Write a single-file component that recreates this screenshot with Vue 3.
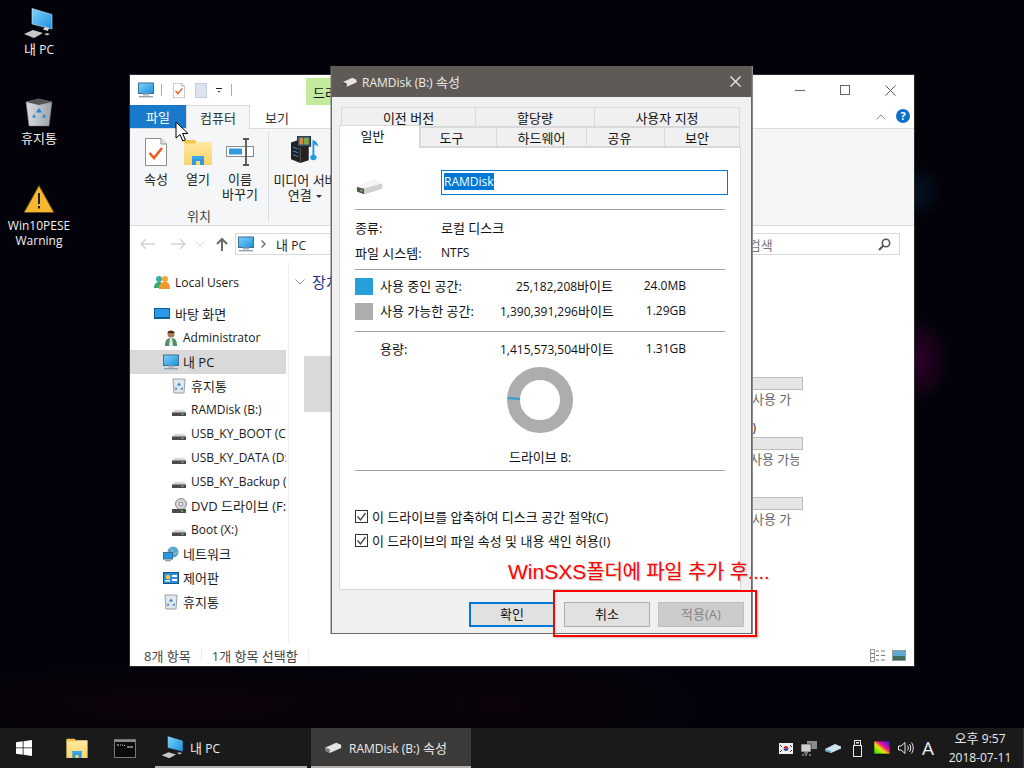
<template>
  <div class="desktop">
    <svg class="defs" width="0" height="0" aria-hidden="true">
      <defs>
        <linearGradient id="scr" x1="0" y1="0" x2="1" y2="1">
          <stop offset="0" stop-color="#7fd4f7" />
          <stop offset="1" stop-color="#1c8fe0" />
        </linearGradient>
        <linearGradient id="fold" x1="0" y1="0" x2="0" y2="1">
          <stop offset="0" stop-color="#ffe9a0" />
          <stop offset="1" stop-color="#fbd36b" />
        </linearGradient>
        <linearGradient id="binG" x1="0" y1="0" x2="1" y2="0">
          <stop offset="0" stop-color="#d8dde2" />
          <stop offset="1" stop-color="#9aa2a8" />
        </linearGradient>
        <symbol id="i-hdd" viewBox="0 0 16 16">
          <path d="M3.5 8h9.5l2 2.5v3.5H1v-3.5z" fill="#d6d6d6" />
          <rect x="1" y="10.5" width="14" height="3.5" fill="#4b4b4b" />
          <rect x="10.5" y="11.5" width="2" height="1.3" fill="#5fe04a" />
        </symbol>
        <symbol id="i-hdd-big" viewBox="0 0 30 18">
          <path d="M1 9 20 1l9 4v6L9 17l-8-3z" fill="#e2e2e2" />
          <path d="M20 1l9 4-20 6-8-2z" fill="#f5f5f5" />
          <path d="M1 9l8 2v6l-8-3z" fill="#555" />
          <path d="M9 11l20-6v6L9 17z" fill="#cfcfcf" />
          <rect x="5" y="12" width="2" height="2" fill="#6fdc55" />
        </symbol>
        <symbol id="i-mon" viewBox="0 0 16 16">
          <rect x="0.5" y="1" width="15" height="10.5" fill="url(#scr)" stroke="#3d6f8f" stroke-width="1" />
          <rect x="5" y="11.5" width="6" height="2" fill="#9fb3c0" />
          <rect x="1" y="14" width="14" height="1.4" fill="#8fa2ae" />
        </symbol>
        <symbol id="i-bin" viewBox="0 0 16 16">
          <path d="M2 1h12l-1 14H3z" fill="#e3e6ea" stroke="#9aa0a6" />
          <path d="M8 4.5l2 3H6zM5 9l1.4 2.6H3.8zM11 9l1.2 2.6H9.6z" fill="#1f7fd0" />
        </symbol>
        <symbol id="i-chk-doc" viewBox="0 0 22 28">
          <path d="M0.5 0.5H16l5.5 5.5v21.500H0.5z" fill="#fff" stroke="#8e8e8e" />
          <path d="M16 0.5V6h5.500" fill="#e6e6e6" stroke="#8e8e8e" />
          <path d="M4.500 15l4.500 5L17 10" fill="none" stroke="#ee5b22" stroke-width="2.600" />
        </symbol>
        <symbol id="i-folder" viewBox="0 0 28 26">
          <path d="M0 3h28v23H0z" fill="url(#fold)" />
          <rect x="0" y="1" width="12" height="3.500" rx="1.500" fill="#f3c64f" />
          <path d="M8 26v-9h12v9h-4v-4h-4v4z" fill="#2e9be0" />
          <path d="M8 17h12v3H8z" fill="#39a7ee" />
        </symbol>
      </defs>
    </svg>

    <main class="stage">
      <div class="desk-icons">
        <div class="desk-icon pc-spot">
          <svg width="32" height="32" viewBox="0 0 32 32">
            <path d="M9 1.500l20 6v14.500L9 17z" fill="url(#scr)" stroke="#cfe6f3" stroke-width=".6" />
            <path d="M22 20l4 1-1 3-5-1.500z" fill="#d6d6d6" />
            <path d="M1 27l9-4 10 3-9 5z" fill="#c8c8c8" />
            <path d="M21 27l3-1 3 1-3 1.500z" fill="#bbb" />
          </svg>
          <span>내 <b class="lat">PC</b></span>
        </div>
        <div class="desk-icon bin-spot">
          <svg width="28" height="29" viewBox="0 0 28 29">
            <path d="M1 4 14 1l13 3-3 24H4z" fill="url(#binG)" stroke="#777" stroke-width=".5" />
            <path d="M1 4l13-3 13 3-13 3z" fill="#555" />
            <path d="M14 10l3 4.500h-6zM9 16l2 3.500H7zM19 16l2 3.500h-4z" fill="#2484cf" />
          </svg>
          <span>휴지통</span>
        </div>
        <div class="desk-icon warn-spot">
          <svg width="32" height="30" viewBox="0 0 32 30">
            <path d="M16 1.500 31 28.500H1z" fill="#f7b731" stroke="#5f4a16" stroke-width="1" />
            <rect x="15" y="9" width="2" height="11" fill="#222" />
            <rect x="15" y="22" width="2" height="2.500" fill="#222" />
          </svg>
          <span class="lat two">Win10PESE<br />Warning</span>
        </div>
      </div>

      <section class="explorer">
        <header class="ex-title">
          <svg class="qat-pc" width="16" height="16"><use href="#i-mon" /></svg>
          <i class="qat-sep"></i>
          <svg class="qat-doc" width="12" height="15"><use href="#i-chk-doc" /></svg>
          <i class="qat-page"></i>
          <i class="qat-drop"></i>
          <i class="qat-sep last"></i>
          <span class="tool-tab">드라이브 도구</span>
          <div class="win-btns">
            <i class="w-min"></i>
            <i class="w-max"></i>
            <svg width="11" height="11" viewBox="0 0 11 11"><path d="M.5.5l10 10M10.500.5l-10 10" stroke="#555" fill="none" /></svg>
          </div>
        </header>

        <nav class="ex-tabs">
          <span class="etab file">파일</span>
          <span class="etab on">컴퓨터</span>
          <span class="etab">보기</span>
          <svg class="collapse" width="10" height="6" viewBox="0 0 10 6"><path d="M.5 5.500 5 1l4.500 4.500" fill="none" stroke="#888" /></svg>
          <span class="help">?</span>
        </nav>

        <div class="ribbon">
          <div class="r-group">
            <div class="r-btns">
              <div class="r-btn">
                <svg width="22" height="28"><use href="#i-chk-doc" /></svg>
                <span>속성</span>
              </div>
              <div class="r-btn">
                <svg width="28" height="26"><use href="#i-folder" /></svg>
                <span>열기</span>
              </div>
              <div class="r-btn">
                <svg width="28" height="28" viewBox="0 0 28 28">
                  <rect x="0.500" y="8.500" width="27" height="10" fill="#fff" stroke="#8a8a8a" />
                  <rect x="3" y="10.500" width="13" height="6" fill="#2e9be0" />
                  <path d="M17 1h6M17 27h6M20 1v26" stroke="#555" stroke-width="1.800" fill="none" />
                </svg>
                <span>이름<br />바꾸기</span>
              </div>
            </div>
            <div class="r-name">위치</div>
          </div>
          <div class="r-btn media">
            <svg width="32" height="30" viewBox="0 0 32 30">
              <path d="M1 7l12-4 7 3v20l-9 3-10-4z" fill="#222" />
              <path d="M11 10v19" stroke="#5b5b5b" />
              <path d="M3 12l6 2M3 16l6 2M3 20l6 2" stroke="#2f8fe0" />
              <rect x="8" y="0" width="14" height="11" fill="#3d5e7e" stroke="#222" />
              <rect x="10" y="2" width="4" height="7" fill="#d98a3a" />
              <rect x="15" y="2" width="5" height="7" fill="#7fa84a" />
              <path d="M24 20V4c3 1 6 3 6 8-1-2-3-3-4-3v11a3.500 3 0 1 1-2 0z" fill="#1e9be8" />
            </svg>
            <span>미디어 서버<br />연결 <i class="caret"></i></span>
          </div>
        </div>

        <div class="addr">
          <svg class="a-arrow" width="16" height="12" viewBox="0 0 16 12"><path d="M1 6h14M6 1 1 6l5 5" fill="none" stroke="#d4d4d4" stroke-width="1.500" /></svg>
          <svg class="a-arrow fwd" width="16" height="12" viewBox="0 0 16 12"><path d="M1 6h14M10 1l5 5-5 5" fill="none" stroke="#d4d4d4" stroke-width="1.500" /></svg>
          <svg class="a-drop" width="8" height="5" viewBox="0 0 8 5"><path d="M.5.500 4 4 7.500.500" fill="none" stroke="#d4d4d4" /></svg>
          <svg class="a-up" width="12" height="14" viewBox="0 0 12 14"><path d="M6 14V2M1 7l5-5 5 5" fill="none" stroke="#6b6b6b" stroke-width="2" /></svg>
          <div class="a-box">
            <svg width="16" height="16"><use href="#i-mon" /></svg>
            <svg class="a-sep" width="5" height="8" viewBox="0 0 5 8"><path d="M.5.500 4 4 .5 7.500" fill="none" stroke="#666" stroke-width="1.300" /></svg>
            <span>내 <b class="lat">PC</b></span>
          </div>
          <div class="a-search">
            <span>내 PC 검색</span>
            <svg width="13" height="13" viewBox="0 0 13 13"><circle cx="8" cy="5" r="3.700" fill="none" stroke="#555" stroke-width="1.600" /><path d="M5.500 7.500 1 12" stroke="#555" stroke-width="2.200" /></svg>
          </div>
        </div>

        <div class="ex-body">
          <aside class="nav">
            <div
              v-for="row in navRows"
              :key="row.id"
              class="nav-row"
              :class="[row.cls, 'lv' + row.lv]"
            >
              <svg v-if="row.icon === 'users'" width="16" height="16" viewBox="0 0 16 16">
                <circle cx="5" cy="5" r="3" fill="#38b0a0" /><path d="M0 14c0-5 3-6 5-6s5 1 5 6z" fill="#3aa86a" />
                <circle cx="11" cy="5" r="3" fill="#f2a738" /><path d="M5 15c0-6 3-7 6-7s5 1 5 7z" fill="#ee9a2d" />
              </svg>
              <svg v-else-if="row.icon === 'desk'" width="16" height="16" viewBox="0 0 16 16">
                <rect x="0.500" y="2.500" width="15" height="10" fill="#2a9ae8" stroke="#0f5f98" />
                <rect x="1" y="11" width="14" height="1.500" fill="#0f5f98" />
              </svg>
              <svg v-else-if="row.icon === 'admin'" width="16" height="18" viewBox="0 0 16 18">
                <circle cx="8" cy="5" r="3.500" fill="#a9764e" /><path d="M4.500 4c0-3 7-3 7 0z" fill="#3b2a20" />
                <path d="M2 17c0-6 2-8 6-8s6 2 6 8z" fill="#4f8f6a" /><path d="M7 9h2l1 8H6z" fill="#e8e8e8" />
              </svg>
              <svg v-else-if="row.icon === 'dvd'" width="16" height="16" viewBox="0 0 16 16">
                <circle cx="10" cy="6" r="5.500" fill="#d5d5d5" stroke="#888" /><circle cx="10" cy="6" r="1.800" fill="#fff" stroke="#888" />
                <path d="M1 11h14v4H1z" fill="#4b4b4b" /><rect x="10" y="12.500" width="2" height="1.200" fill="#5fe04a" />
              </svg>
              <svg v-else-if="row.icon === 'net'" width="16" height="16" viewBox="0 0 16 16">
                <circle cx="10" cy="6" r="5.500" fill="#5aa5d8" /><path d="M7 2c2 1 3 3 2 5s3 1 5-1" fill="none" stroke="#9fd08a" />
                <rect x="0.500" y="6.500" width="9" height="6.500" fill="#2a9ae8" stroke="#3d6f8f" /><rect x="2" y="14" width="6" height="1.300" fill="#8fa2ae" />
              </svg>
              <svg v-else-if="row.icon === 'ctrl'" width="16" height="16" viewBox="0 0 16 16">
                <rect x="0.500" y="2.500" width="15" height="11" fill="#2a8fd8" stroke="#14558a" />
                <circle cx="5" cy="7" r="2.300" fill="#f4c94a" /><rect x="9" y="5" width="5" height="2" fill="#fff" /><rect x="9" y="9" width="5" height="2" fill="#fff" /><rect x="2" y="10" width="5" height="1.500" fill="#fff" />
              </svg>
              <svg v-else width="16" height="16"><use :href="'#i-' + row.icon" /></svg>
              <span>{{ row.label }}</span>
            </div>
          </aside>
          <div class="nav-line"></div>
          <div class="pane">
            <div class="group-head">
              <svg width="10" height="6" viewBox="0 0 10 6"><path d="M.5.500 5 5 9.500.500" fill="none" stroke="#888" /></svg>
              <span>장치 및 드라이브</span>
            </div>
            <div class="tiles">
              <div v-for="t in driveTiles" :key="t.id" class="tile" :class="{ sel: t.sel }">
                <div class="tile-thumb"></div>
                <div class="tile-info">
                  <div class="tile-name lat">{{ t.name }}</div>
                  <div class="tile-bar"></div>
                  <div class="tile-free" :style="{ paddingLeft: t.pad + 'px' }">{{ t.free }}</div>
                </div>
              </div>
            </div>
          </div>
        </div>

        <footer class="status">
          <span>8개 항목</span>
          <i></i>
          <span>1개 항목 선택함</span>
          <i></i>
          <div class="view-btns">
            <svg width="16" height="13" viewBox="0 0 16 13">
              <rect x="0.500" y="0.500" width="4" height="12" fill="#fff" stroke="#999" />
              <path d="M6 2h3M11 2h4M6 6.500h3M11 6.500h4M6 11h3M11 11h4M1 4.500h3M1 8.500h3" stroke="#777" fill="none" />
            </svg>
            <svg width="14" height="11" viewBox="0 0 14 11">
              <rect x="0.500" y="0.500" width="13" height="10" fill="#5fa8d8" stroke="#999" />
              <rect x="1" y="6" width="12" height="4" fill="#3f6f58" />
            </svg>
          </div>
        </footer>
      </section>

      <section class="dialog">
        <header class="dlg-title">
          <svg width="15" height="12" viewBox="0 0 16 12"><path d="M1 6 11 1.500l4.500 2v3L5 11l-4-2z" fill="#e4e4e4" /><path d="M1 6l4 1.500V11l-4-2z" fill="#444" /></svg>
          <span class="dlg-cap"><b class="lat">RAMDisk (B:)</b> 속성</span>
          <svg width="11" height="11" viewBox="0 0 11 11"><path d="M.5.500l10 10M10.500.500l-10 10" stroke="#f0f0f0" stroke-width="1.200" fill="none" /></svg>
        </header>
        <div class="dlg-body">
          <div class="dtabs row1">
            <span v-for="t in tabsTop" :key="t.label" class="dtab" :style="{ width: t.w + 'px' }">{{ t.label }}</span>
          </div>
          <div class="dtabs row2">
            <span
              v-for="t in tabsBottom"
              :key="t.label"
              class="dtab"
              :class="{ on: t.on }"
              :style="{ width: t.w + 'px', paddingRight: t.pad + 'px' }"
            >{{ t.label }}</span>
          </div>
          <div class="panel">
            <div class="name-row">
              <svg width="30" height="18"><use href="#i-hdd-big" /></svg>
              <div class="name-input"><span class="lat">RAMDisk</span></div>
            </div>
            <hr class="rule r1" />
            <div class="info-row first"><span class="info-k">종류:</span><span>로컬 디스크</span></div>
            <div class="info-row"><span class="info-k">파일 시스템:</span><span class="lat">NTFS</span></div>
            <hr class="rule r2" />
            <div v-for="u in usage" :key="u.label" class="use-row">
              <i class="swatch" :style="{ background: u.color }"></i>
              <span>{{ u.label }}</span>
              <span class="num"><b class="lat">{{ u.bytes }}</b>바이트</span>
              <span class="num lat">{{ u.size }}</span>
            </div>
            <hr class="rule r3" />
            <div class="use-row">
              <i></i>
              <span>용량:</span>
              <span class="num"><b class="lat">1,415,573,504</b>바이트</span>
              <span class="num lat">1.31GB</span>
            </div>
            <svg class="donut" width="66" height="66" viewBox="0 0 66 66">
              <circle cx="33" cy="33" r="26.500" fill="none" stroke="#adadad" stroke-width="13" />
              <path d="M0.500 31 13 32" stroke="#26a0da" stroke-width="2" fill="none" />
            </svg>
            <div class="drive-cap">드라이브 <b class="lat">B:</b></div>
            <hr class="rule r4" />
            <label v-for="c in checks" :key="c" class="chk">
              <i class="box">
                <svg width="11" height="11" viewBox="0 0 11 11"><path d="M1.500 5.500 4.500 9 9.500 2" fill="none" stroke="#444" stroke-width="1.300" /></svg>
              </i>
              <span>{{ c }}</span>
            </label>
          </div>
          <div class="dlg-foot">
            <button class="btn ok">확인</button>
            <button class="btn">취소</button>
            <button class="btn off">적용(A)</button>
          </div>
        </div>
      </section>

      <div class="note"><b class="note-lat">WinSXS</b>폴더에 파일 추가 후....</div>
      <div class="note-box"></div>

      <svg class="cursor" width="14" height="22" viewBox="0 0 14 22">
        <path d="M1 1v16l4-3.500 2.800 6.500 2.600-1.100-2.800-6.400H13z" fill="#fff" stroke="#000" stroke-width="1" />
      </svg>
    </main>

    <footer class="taskbar">
      <svg class="start" width="16" height="16" viewBox="0 0 16 16">
        <path d="M0 2.300 6.700 1.300V7.500H0zM7.500 1.200 16 0v7.500H7.500zM0 8.300h6.700v6.400L0 13.700zM7.500 8.300H16V16l-8.500-1.200z" fill="#fff" />
      </svg>
      <svg class="t-folder" width="22" height="20" viewBox="0 0 28 26"><use href="#i-folder" /></svg>
      <svg class="t-cmd" width="22" height="19" viewBox="0 0 22 19">
        <rect x="0.500" y="0.500" width="21" height="18" fill="#0b0b0b" stroke="#777" />
        <rect x="1" y="1" width="20" height="2" fill="#8a8a8a" />
        <path d="M3 6h2M6 6h1M8 6h1M10 6l1 1M13 8h6" stroke="#ddd" fill="none" />
      </svg>
      <div class="t-app pc">
        <svg width="24" height="24" viewBox="0 0 32 32">
          <path d="M9 1.500l20 6v14.500L9 17z" fill="url(#scr)" />
          <path d="M1 27l9-4 10 3-9 5z" fill="#c8c8c8" />
          <path d="M21 24l4-1 3 1-3 2z" fill="#bbb" />
        </svg>
        <span>내 <b class="lat">PC</b></span>
      </div>
      <div class="t-app active">
        <svg width="22" height="13" viewBox="0 0 16 12"><path d="M1 6 11 1.500l4.500 2v3L5 11l-4-2z" fill="#e4e4e4" /><path d="M1 6l4 1.500V11l-4-2z" fill="#777" /></svg>
        <span><b class="lat">RAMDisk (B:)</b> 속성</span>
      </div>
      <div class="tray">
        <svg width="14" height="11" viewBox="0 0 14 11">
          <rect width="14" height="11" fill="#f0f0f0" />
          <path d="M4.500 5.500a2.500 2.500 0 0 1 5 0z" fill="#d0202a" /><path d="M4.500 5.500a2.500 2.500 0 0 0 5 0z" fill="#1f3f9a" />
          <path d="M1 2l2 2M11 2l2 2M1 9l2-2M11 9l2-2" stroke="#333" />
        </svg>
        <svg width="16" height="15" viewBox="0 0 16 15">
          <rect x="6" y="0" width="10" height="8" fill="#8a8a8a" /><rect x="0" y="3" width="10" height="8" fill="#cfcfcf" stroke="#1a1a1a" stroke-width=".6" />
          <path d="M3 12h4M1 14h2M5 13v2M8 14h2" stroke="#ccc" />
        </svg>
        <svg width="16" height="9" viewBox="0 0 16 9"><path d="M0 5 10 0l6 2.500v2L6 9 0 7z" fill="#cfe3ee" /><path d="M0 5l6 2v2L0 7z" fill="#59a6d4" /></svg>
        <svg class="t-usb" width="11" height="17" viewBox="0 0 11 17">
          <rect x="1.500" y="5.500" width="8" height="11" fill="none" stroke="#e8e8e8" />
          <rect x="2.500" y="0.500" width="6" height="5" fill="none" stroke="#e8e8e8" />
          <rect x="4" y="2" width="3" height="1.500" fill="#e8e8e8" />
        </svg>
        <svg class="t-color" width="16" height="15" viewBox="0 0 16 15">
          <defs>
            <linearGradient id="rainbow" x1="0" y1="1" x2="1" y2="0">
              <stop offset="0" stop-color="#00e020" /><stop offset=".4" stop-color="#e8e800" />
              <stop offset=".6" stop-color="#f01090" /><stop offset="1" stop-color="#1020f0" />
            </linearGradient>
          </defs>
          <rect x="0" y="0" width="16" height="13" fill="url(#rainbow)" stroke="#111" stroke-width=".6" />
          <rect x="4" y="13" width="8" height="2" fill="#111" />
        </svg>
        <svg width="16" height="14" viewBox="0 0 16 14">
          <path d="M.5 5h2.500L7 1.500v11L3 9H.5z" fill="none" stroke="#e8e8e8" />
          <path d="M9.500 4.500c1 1.500 1 3.500 0 5M11.500 3c1.700 2.500 1.700 5.500 0 8M13.500 1.500c2.300 3 2.300 8 0 11" fill="none" stroke="#e8e8e8" />
        </svg>
        <span class="ime">A</span>
        <div class="clock"><span>오후 <b class="lat">9:57</b></span><span class="lat">2018-07-11</span></div>
      </div>
    </footer>
  </div>
</template>

<script setup>
const navRows = [
  { id: 'users', label: 'Local Users', lv: 1, icon: 'users', cls: 'lat-row gap' },
  { id: 'desk', label: '바탕 화면', lv: 1, icon: 'desk' },
  { id: 'admin', label: 'Administrator', lv: 2, icon: 'admin', cls: 'lat-row' },
  { id: 'pc', label: '내 PC', lv: 2, icon: 'mon', cls: 'sel' },
  { id: 'bin', label: '휴지통', lv: 3, icon: 'bin' },
  { id: 'b', label: 'RAMDisk (B:)', lv: 3, icon: 'hdd', cls: 'lat-row' },
  { id: 'c', label: 'USB_KY_BOOT (C:)', lv: 3, icon: 'hdd', cls: 'lat-row' },
  { id: 'd', label: 'USB_KY_DATA (D:)', lv: 3, icon: 'hdd', cls: 'lat-row' },
  { id: 'e', label: 'USB_KY_Backup (E:)', lv: 3, icon: 'hdd', cls: 'lat-row' },
  { id: 'f', label: 'DVD 드라이브 (F:)', lv: 3, icon: 'dvd' },
  { id: 'x', label: 'Boot (X:)', lv: 3, icon: 'hdd', cls: 'lat-row' },
  { id: 'net', label: '네트워크', lv: 2, icon: 'net' },
  { id: 'ctrl', label: '제어판', lv: 2, icon: 'ctrl' },
  { id: 'bin2', label: '휴지통', lv: 2, icon: 'bin' },
]

const driveTiles = [
  { id: 1, name: '', free: '사용 가', sel: true, pad: 199 },
  { id: 2, name: 'USB_KY_BOOT (C:)', free: '사용 가능', pad: 197 },
  { id: 3, name: '', free: '사용 가', pad: 199 },
]

const tabsTop = [
  { label: '이전 버전', w: 134 },
  { label: '할당량', w: 119 },
  { label: '사용자 지정', w: 146 },
]

const tabsBottom = [
  { label: '일반', w: 81, on: true, pad: 14 },
  { label: '도구', w: 76, pad: 14 },
  { label: '하드웨어', w: 90, pad: 0 },
  { label: '공유', w: 78, pad: 12 },
  { label: '보안', w: 76, pad: 10 },
]

const usage = [
  { label: '사용 중인 공간:', bytes: '25,182,208', size: '24.0MB', color: '#26a0da' },
  { label: '사용 가능한 공간:', bytes: '1,390,391,296', size: '1.29GB', color: '#adadad' },
]

const checks = [
  '이 드라이브를 압축하여 디스크 공간 절약(C)',
  '이 드라이브의 파일 속성 및 내용 색인 허용(I)',
]
</script>

<style>
html, body { margin: 0; background: #03020a; }
</style>

<style scoped>
* { box-sizing: border-box; }
b, i { font-weight: 400; font-style: normal; }
.lat { font-size: 12px; font-family: "Open Sans", "Noto Sans CJK KR", sans-serif; }
.defs { position: absolute; }

.desktop {
  width: 1024px; height: 768px; overflow: hidden;
  display: flex; flex-direction: column;
  font-family: "Open Sans", "Noto Sans CJK KR", sans-serif;
  font-size: 13px; color: #111;
  background:
    radial-gradient(circle at 915px 192px, rgba(6, 50, 80, .4), transparent 28px),
    radial-gradient(ellipse 36px 45px at 915px 360px, rgba(90, 0, 70, .55), transparent),
    radial-gradient(ellipse 300px 40px at 180px 705px, rgba(36, 4, 8, .35), transparent),
    radial-gradient(ellipse 200px 60px at 500px 705px, rgba(20, 2, 10, .5), transparent),
    #03020a;
}
.stage { position: relative; flex: 1; }

.desk-icons { position: absolute; left: 0; top: 0; width: 78px; display: flex; flex-direction: column; align-items: center; color: #f2f2f2; text-shadow: 0 1px 2px #000; }
.desk-icon { display: flex; flex-direction: column; align-items: center; }
.desk-icon span { line-height: 15px; text-align: center; }
.pc-spot { margin-top: 7px; }
.pc-spot span { margin-top: 3px; }
.bin-spot { margin-top: 41px; }
.bin-spot span { margin-top: 4px; }
.warn-spot { margin-top: 38px; }
.warn-spot span { margin-top: 4px; }
.two { line-height: 15px; }

.explorer {
  position: absolute; left: 130px; top: 75px; width: 784px; height: 591px;
  background: #fff; display: flex; flex-direction: column; overflow: hidden;
  box-shadow: 0 0 0 1px #2a2a2a;
}
.ex-title { height: 30px; display: flex; align-items: center; flex: none; position: relative; }
.qat-pc { margin-left: 8px; }
.qat-sep { width: 1px; height: 12px; background: #aaa; margin-left: 7px; }
.qat-doc { margin-left: 11px; }
.qat-page { width: 12px; height: 15px; background: #dde4f0; border: 1px solid #c3cddc; margin-left: 10px; }
.qat-drop { width: 6px; height: 5px; margin-left: 9px; border-top: 1px solid #222; background: linear-gradient(#222, #222) 0 2px / 100% 3px no-repeat; clip-path: polygon(0 0, 100% 0, 100% 40%, 50% 100%, 0 40%); }
.qat-sep.last { margin-left: 9px; }
.tool-tab { position: absolute; left: 176px; top: 3px; width: 120px; height: 27px; background: #c2eb9e; padding: 5px 7px; white-space: nowrap; }
.win-btns { margin-left: auto; display: flex; align-items: center; gap: 35px; padding-right: 18px; }
.w-min { width: 10px; height: 1px; background: #666; }
.w-max { width: 10px; height: 10px; border: 1px solid #666; }

.ex-tabs { height: 24px; flex: none; display: flex; position: relative; border-bottom: 1px solid #dadbdc; }
.etab { width: 54px; display: flex; align-items: center; justify-content: center; height: 24px; color: #333; }
.etab.file { width: 56px; background: #1979ca; color: #fff; height: 23px; }
.etab.on { width: 64px; background: #f5f6f7; border: 1px solid #dadbdc; border-bottom: 0; height: 24px; }
.collapse { position: absolute; right: 28px; top: 9px; }
.help { position: absolute; right: 4px; top: 4px; width: 14px; height: 14px; border-radius: 50%; background: #0a70c8; color: #fff; font: 700 11px/14px "Open Sans", sans-serif; text-align: center; }

.ribbon { height: 97px; flex: none; background: #f5f6f7; border-bottom: 1px solid #dadbdc; display: flex; }
.r-group { width: 139px; border-right: 1px solid #dcdddf; margin-top: 3px; margin-bottom: 3px; display: flex; flex-direction: column; justify-content: space-between; padding-left: 6px; }
.r-btns { display: flex; gap: 2px; }
.r-btn { width: 40px; display: flex; flex-direction: column; align-items: center; text-align: center; line-height: 15px; color: #222; padding-top: 6px; }
.r-btn svg { height: 28px; }
.r-btn span { margin-top: 6px; white-space: nowrap; }
.r-name { text-align: center; color: #444; line-height: 14px; padding-right: 6px; margin-bottom: -1px; }
.media { width: 72px; margin-left: 0; padding-top: 7px; }
.media span { margin-top: 9px; }
.caret { display: inline-block; vertical-align: middle; border: 3.500px solid transparent; border-top-color: #333; border-bottom: 0; margin-left: 1px; }

.addr { height: 36px; flex: none; display: flex; align-items: center; position: relative; padding-top: 0; }
.a-arrow { margin-left: 10px; }
.a-arrow.fwd { margin-left: 14px; }
.a-drop { margin-left: 10px; }
.a-up { margin-left: 12px; }
.a-box { margin-left: 7px; width: 461px; height: 22px; border: 1px solid #d9d9d9; display: flex; align-items: center; padding-left: 2px; color: #222; }
.a-sep { margin: 0 10px 0 7px; }
.a-search { margin-left: 14px; width: 190px; height: 22px; border: 1px solid #d9d9d9; display: flex; align-items: center; justify-content: space-between; padding: 0 8px 0 3px; color: #777; }

.ex-body { flex: 1; display: flex; min-height: 0; }
.nav { width: 156px; flex: none; padding-top: 8px; overflow: hidden; }
.nav-row { height: 24px; display: flex; align-items: center; white-space: nowrap; overflow: hidden; color: #1a1a1a; }
.nav-row svg { flex: none; margin-right: 4px; }
.nav-row span { margin-bottom: 2px; }
.lat-row span { font-size: 12px; }
.gap { margin-bottom: 8px; }
.gap span { margin-bottom: 0; }
.lv1 { padding-left: 24px; }
.lv1 svg { margin-right: 5px; }
.lv2 { padding-left: 33px; }
.lv3 { padding-left: 41px; }
.sel.nav-row { background: #d9d9d9; }
.nav-line { width: 1px; margin-left: 2px; background: #f0f0f0; }
.pane { flex: 1; overflow: hidden; padding-left: 6px; }
.group-head { display: flex; align-items: center; gap: 7px; height: 38px; padding-left: 0; padding-top: 1px; color: #1e3287; font-size: 15px; white-space: nowrap; }
.tiles { margin-top: 56px; margin-left: 9px; width: 499px; display: flex; flex-direction: column; gap: 4px; }
.tile { height: 56px; display: flex; }
.tile-thumb { width: 200px; }
.tile.sel .tile-thumb { background: #d9d9d9; }
.tile-info { margin-left: auto; width: 250px; position: relative; padding-top: 21px; }
.tile-name { position: absolute; left: -2px; top: 3px; color: #222; width: 205px; text-align: right; white-space: nowrap; }
.tile-bar { height: 13px; background: #e6e6e6; border: 1px solid #bcbcbc; }
.tile-free { color: #666; line-height: 18px; white-space: nowrap; overflow: hidden; width: 246px; }

.status { height: 22px; flex: none; display: flex; align-items: center; padding-left: 14px; color: #444; }
.status i { width: 1px; height: 14px; background: #eee; margin: 0 10px; }
.view-btns { margin-left: auto; display: flex; align-items: center; gap: 6px; padding-right: 8px; }

.dialog {
  position: absolute; left: 331px; top: 66px; width: 421px; height: 568px;
  border: 1px solid #6a6a6a; border-top: 0; background: #f0f0f0;
  display: flex; flex-direction: column;
  box-shadow: 1px 0 0 #8a8a8a, -1px 0 0 rgba(120, 120, 120, .5);
}
.dlg-title { height: 31px; flex: none; background: #5f5a56; display: flex; align-items: center; padding: 0 10px; color: #ececec; }
.dlg-cap { margin-left: 5px; flex: 1; }
.dlg-body { flex: 1; display: flex; flex-direction: column; padding-top: 10px; }
.dtabs { display: flex; margin-left: 9px; height: 20px; }
.dtab { display: flex; align-items: center; justify-content: center; height: 20px; background: #f0f0f0; border: 1px solid #d9d9d9; border-right-width: 0; color: #111; }
.dtab:last-child { border-right-width: 1px; }
.row2 { margin-left: 7px; position: relative; z-index: 1; }
.dtab.on { height: 23px; margin-top: -2px; background: #fff; border-right-width: 1px; border-bottom: 0; padding-bottom: 3px; }
.panel { margin-left: 7px; width: 402px; height: 443px; background: #fff; border: 1px solid #d9d9d9; padding: 0 15px; flex: none; }
.name-row { margin-top: 22px; height: 25px; display: flex; align-items: center; }
.name-row svg { margin: 8px 0 0 1px; }
.name-input { margin-left: 55px; width: 287px; flex: none; height: 25px; border: 1px solid #0078d7; padding: 0 3px 3px 2px; display: flex; align-items: center; position: relative; left: 3px; }
.name-input span { background: #0078d7; color: #fff; line-height: 17px; }
.rule { border: 0; height: 1px; background: #a0a0a0; margin: 0; }
.r1 { margin-top: 14px; }
.info-row { display: flex; height: 25px; align-items: center; padding-bottom: 2px; }
.info-row.first { margin-top: 6px; }
.info-k { width: 86px; flex: none; }
.r2 { margin-top: 3px; margin-bottom: 4px; }
.use-row { display: grid; grid-template-columns: 25px 120px 113px 73px; height: 25px; align-items: center; white-space: nowrap; padding-bottom: 2px; }
.swatch { width: 18px; height: 17px; margin-top: 2px; }
.num { text-align: right; }
.r3 { margin-top: 7px; margin-bottom: 5px; }
.donut { display: block; margin: 5px auto 0; }
.drive-cap { text-align: center; margin-top: 14px; line-height: 20px; }
.r4 { margin-top: 2px; margin-bottom: 33px; }
.chk { display: flex; align-items: center; height: 24px; }
.box { width: 13px; height: 13px; border: 1px solid #333; display: flex; align-items: center; justify-content: center; margin-right: 4px; flex: none; }
.dlg-foot { display: flex; margin-top: 12px; padding-left: 137px; gap: 9px; }
.btn { width: 86px; height: 25px; padding: 0 0 3px; font: inherit; color: #111; background: #e1e1e1; border: 1px solid #adadad; }
.btn.ok { border: 2px solid #0078d7; }
.btn.off { background: #ccc; border-color: #bfbfbf; color: #838383; margin-left: -1px; }

.note { position: absolute; left: 508px; top: 557px; font-size: 20px; line-height: 30px; color: #f00; white-space: nowrap; text-shadow: 1px 1px 1px rgba(160, 160, 160, .5); font-family: "Liberation Sans", "Noto Sans CJK KR", sans-serif; letter-spacing: -.2px; }
.note-lat { font-size: 21px; letter-spacing: 0; }
.note-box { position: absolute; left: 553px; top: 590px; width: 204px; height: 47px; border: 2px solid #f00; box-shadow: 1px 1px 2px rgba(120, 120, 120, .5); }
.cursor { position: absolute; left: 175px; top: 121px; }

.taskbar { height: 40px; flex: none; background: #1a1a1a; display: flex; align-items: center; color: #ececec; position: relative; }
.start { margin-left: 16px; }
.t-folder { margin-left: 34px; }
.t-cmd { margin-left: 26px; }
.t-app { height: 40px; display: flex; align-items: center; border-bottom: 2px solid #b5b0ab; }
.t-app.pc { width: 152px; margin-left: 19px; padding-left: 6px; gap: 5px; }
.t-app.active { width: 160px; margin-left: 4px; padding-left: 11px; gap: 5px; background: #3b3a38; }
.tray { margin-left: auto; display: flex; align-items: center; height: 40px; padding-right: 5px; border-right: 1px solid #333; gap: 8px; }
.t-usb, .t-color { margin-left: 3px; }
.ime { font: 400 19px/1 "Open Sans", sans-serif; }
.clock { display: flex; flex-direction: column; align-items: center; width: 76px; line-height: 19px; }
</style>
